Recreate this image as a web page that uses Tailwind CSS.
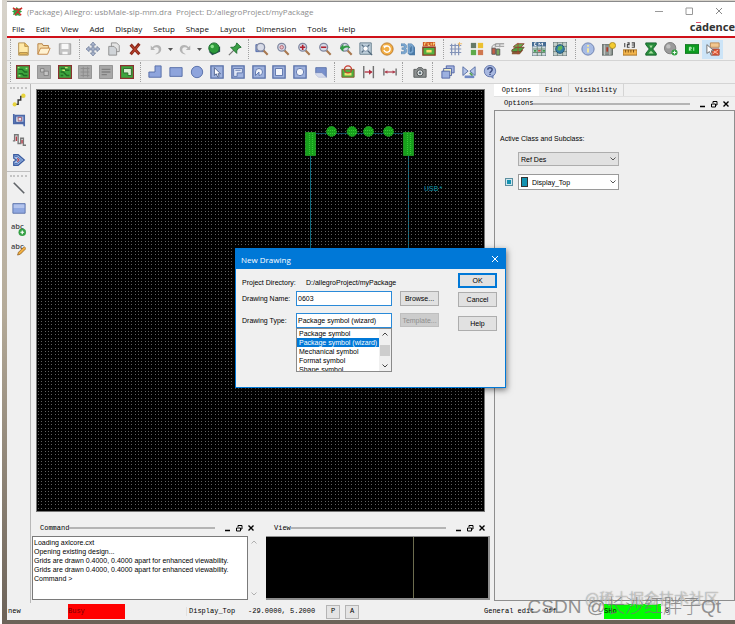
<!DOCTYPE html>
<html lang="en">
<head>
  <meta charset="UTF-8" />
  <meta name="viewport" content="width=device-width, initial-scale=1.0"/>
  <title>Allegro Package Editor</title>
  <script src="https://cdn.jsdelivr.net/npm/@tailwindcss/browser@4"></script>
</head>
<body class="h-screen overflow-hidden border-l-2 border-white bg-gradient-to-b from-[#d8d4cc] via-[#b4aa98] to-[#6c6258] pt-px pb-1 pl-[5px] font-['Liberation_Sans',sans-serif] text-[7px] leading-[9px] text-black">
  <div class="relative flex h-full flex-col border-t border-[#8a8a8a] bg-[#f0f0f0]">

    <!-- Title bar -->
    <header class="flex h-[18px] shrink-0 items-center bg-white pl-[5px] font-['Open_Sans',sans-serif] text-[8px] text-[#8c8c8c]">
      <svg class="mr-1 size-[11px]" viewBox="0 0 12 12">
        <path d="M1 2l3 1 1-2 2 2 4-1-2 3 2 1-3 2 1 3-3-1-2 1-1-2-2 1 1-3-2-1 2-1z" fill="#2fa545"/>
        <path d="M1 2l3 2 3-1M3 10l4-5 4-3M6 6l4 4" stroke="#d22b2b" stroke-width="1.6" fill="none"/>
      </svg>
      <h1 class="whitespace-pre">(Package) Allegro: usbMale-sip-mm.dra  Project: D:/allegroProject/myPackage</h1>
      <div class="ml-auto flex gap-[22px] pr-3">
        <button aria-label="Minimize"><svg class="size-2" viewBox="0 0 8 8"><path d="M0 4.5h8" stroke="#999"/></svg></button>
        <button aria-label="Maximize"><svg class="size-2" viewBox="0 0 8 8"><path d="M1 1h6.500v6.500h-6.500z" stroke="#999" fill="none"/></svg></button>
        <button aria-label="Close"><svg class="size-2" viewBox="0 0 8 8"><path d="M1 1l6 6M7 1l-6 6" stroke="#888" fill="none"/></svg></button>
      </div>
    </header>

    <!-- Menu -->
    <nav class="flex h-[18px] shrink-0 items-center border-b-2 border-[#cf1019] bg-white pl-[5px] font-['Open_Sans',sans-serif] text-[8px] text-[#111]">
      <div class="flex gap-[11px]">
        <button>File</button><button>Edit</button><button>View</button><button>Add</button><button>Display</button><button>Setup</button><button>Shape</button><button>Layout</button><button>Dimension</button><button>Tools</button><button>Help</button>
      </div>
      <div class="ml-auto pb-1 font-['Noto_Sans',sans-serif] text-[11px] font-bold text-[#333]">c<span class="relative">a<i class="absolute top-[3px] left-px h-px w-[5px] bg-[#e0506e]"></i></span>dence</div>
    </nav>

    <!-- Toolbars -->
    <div class="flex h-[23px] shrink-0 items-center border-b border-[#d4d4d4]">
      <div class="ml-[3px] h-5 border-l border-dotted border-[#a0a0a0]"></div>
      <div class="ml-[2px] flex w-[62px]" data-tools="new open save"></div>
      <div class="ml-[4px] h-5 border-l border-dotted border-[#a0a0a0]"></div>
      <div class="ml-[3px] flex w-[162px]" data-tools="move copy delete undo caret redo caret globe pin"></div>
      <div class="ml-[3px] h-5 border-l border-dotted border-[#a0a0a0]"></div>
      <div class="ml-[3px] flex w-[187px]" data-tools="zoomRect zoomFit zoomIn zoomOut zoomPrev zoomWorld refresh view3d flip"></div>
      <div class="ml-[4px] h-5 border-l border-dotted border-[#a0a0a0]"></div>
      <div class="ml-[2px] flex w-[124px]" data-tools="grid colors shadow layers cm web"></div>
      <div class="ml-[5px] h-5 border-l border-dotted border-[#a0a0a0]"></div>
      <div class="ml-[2px] flex w-[145px]" data-tools="info highlight measure waive dehilite r1 place"></div>
    </div>
    <div class="flex h-[23px] shrink-0 items-center border-b border-[#d4d4d4]">
      <div class="ml-[3px] h-5 border-l border-dotted border-[#a0a0a0]"></div>
      <div class="ml-[2px] flex w-[124px]" data-tools="app1 app2 app3 app4 app5 app6"></div>
      <div class="ml-[3px] h-5 border-l border-dotted border-[#a0a0a0]"></div>
      <div class="ml-[4px] flex w-[186px]" data-tools="poly rect circle select voidPoly voidCurve voidRect voidCircle island"></div>
      <div class="ml-[3px] h-5 border-l border-dotted border-[#a0a0a0]"></div>
      <div class="ml-[3px] flex w-[62px]" data-tools="board dimEdge dimLine"></div>
      <div class="ml-[2px] h-5 border-l border-dotted border-[#a0a0a0]"></div>
      <div class="ml-[6px] flex w-[21px]" data-tools="camera"></div>
      <div class="ml-[2px] h-5 border-l border-dotted border-[#a0a0a0]"></div>
      <div class="ml-[5px] flex w-[62px]" data-tools="cascade mirror help"></div>
    </div>

    <!-- Work area -->
    <main class="flex min-h-0 flex-1">
      <aside class="w-6 shrink-0 border-r border-[#b8b8b8] pt-[3px]">
        <div class="mx-[3px] border-t-2 border-dotted border-[#c4c4c4]"></div>
        <div class="flex flex-col pt-px" data-vtools="connect slide tune phase"></div>
        <div class="mt-px mb-[3px] border-t border-[#c0c0c0]"></div>
        <div class="mx-[3px] border-t-2 border-dotted border-[#c4c4c4]"></div>
        <div class="flex flex-col pt-px" data-vtools="line box textAdd textEdit"></div>
      </aside>

      <section class="flex min-w-0 flex-1 flex-col pt-[5px] pr-[4px] pb-[3px]">
        <div class="mr-[5px] ml-[5px] min-h-0 flex-1 overflow-hidden border border-[#777] bg-black">
          <svg class="size-full" role="img" aria-label="Board canvas">
            <defs>
              <pattern id="dots" width="10" height="10" patternUnits="userSpaceOnUse">
                <path d="M1 1h1M4 1h1M8 1h1M1 4h1M4 4h1M8 4h1M1 8h1M4 8h1M8 8h1" transform="translate(0 .5)" stroke="#606060"/>
              </pattern>
            </defs>
            <path d="M279 43.500h88" stroke="#0d4a5c" />
            <path d="M273.500 66v220M371.500 66v220" stroke="#0b6a80"/>
            <rect width="100%" height="100%" fill="url(#dots)"/>
            <g fill="#17a01c" stroke="#35c835" stroke-dasharray="1 1">
              <rect x="268.500" y="42.500" width="10" height="23"/>
              <rect x="366.500" y="42.500" width="10" height="23"/>
              <path d="M272.500 43v22M275.500 43v22M370.500 43v22M373.500 43v22"/>
              <circle cx="294.500" cy="41.500" r="5"/><circle cx="315" cy="41.500" r="5"/><circle cx="331.500" cy="41.500" r="5"/><circle cx="351.500" cy="41.500" r="5"/>
              <path d="M291 40.500h7M291 43.500h7M312 40.500h7M312 43.500h7M328 40.500h7M328 43.500h7M348 40.500h7M348 43.500h7"/>
            </g>
            <text x="387" y="101" fill="#0d8ea4" class="font-['Liberation_Mono',monospace] text-[8px]">USB*</text>
          </svg>
        </div>

        <!-- Docked windows -->
        <div class="flex shrink-0 gap-[7px] pt-2 pl-px">
          <section class="w-[227px] shrink-0">
            <div class="flex h-4 items-center pr-1 pl-2 font-['Liberation_Mono',monospace]">
              <h2>Command</h2>
              <div class="mr-2 h-[2px] flex-1 bg-[#b4b4b4]"></div>
              <div class="flex gap-1" data-dock></div>
            </div>
            <div class="flex h-16">
              <div class="min-w-0 flex-1 border border-[#7a7a7a] bg-white pt-px pl-px whitespace-nowrap">
                <p>Loading axlcore.cxt</p>
                <p>Opening existing design...</p>
                <p>Grids are drawn 0.4000, 0.4000 apart for enhanced viewability.</p>
                <p>Grids are drawn 0.4000, 0.4000 apart for enhanced viewability.</p>
                <p>Command &gt;</p>
              </div>
              <div class="flex w-[11px] flex-col items-center justify-between py-1">
                <svg class="h-1 w-[6px]" viewBox="0 0 6 4"><path d="M.5 3.500L3 1l2.500 2.500" stroke="#b0b0b0" fill="none"/></svg>
                <svg class="h-1 w-[6px]" viewBox="0 0 6 4"><path d="M.5 .5L3 3l2.500-2.500" stroke="#b0b0b0" fill="none"/></svg>
              </div>
            </div>
          </section>
          <section class="min-w-0 flex-1">
            <div class="flex h-4 items-center pr-1 pl-2 font-['Liberation_Mono',monospace]">
              <h2>View</h2>
              <div class="mr-2 h-[2px] flex-1 bg-[#b4b4b4]"></div>
              <div class="flex gap-1" data-dock></div>
            </div>
            <div class="flex h-16 border-t border-r-2 border-b-2 border-[#8e8e8e] bg-black">
              <div class="w-2/3 border-r border-[#6c6c4e]"></div>
            </div>
          </section>
        </div>
      </section>

      <!-- Options panel -->
      <section class="flex w-[241px] shrink-0 flex-col">
        <div class="flex h-[13px] border-b border-[#e0e0e0] font-['Liberation_Mono',monospace]" role="tablist">
          <button role="tab" aria-selected="true" class="w-[45px] bg-white">Options</button>
          <button role="tab" class="w-[30px] border-r border-[#d4d4d4]">Find</button>
          <button role="tab" class="w-[55px] border-r border-[#d4d4d4]">Visibility</button>
        </div>
        <div class="flex h-[13px] items-center pr-[5px] pl-[10px] font-['Liberation_Mono',monospace]">
          <h2>Options</h2>
          <div class="mr-2 h-[2px] flex-1 bg-[#b4b4b4]"></div>
          <div class="flex gap-1" data-dock></div>
        </div>
        <form class="mb-[2px] flex-1 border border-[#8e8e8e] bg-[#efefef] pt-[23px] pl-[5px]">
          <label for="activeClass">Active Class and Subclass:</label>
          <div class="mt-[9px] ml-[18px] w-[101px]">
            <div class="relative">
              <select id="activeClass" class="h-[14px] w-full appearance-none border border-[#adadad] bg-[#e1e1e1] px-[2px]"><option>Ref Des</option></select>
              <svg class="pointer-events-none absolute top-[5px] right-[3px] h-1 w-[6px]" viewBox="0 0 6 4"><path d="M.5 .5L3 3l2.500-2.500" stroke="#555" fill="none"/></svg>
            </div>
          </div>
          <div class="mt-2 flex items-center gap-[5px] pl-[5px]">
            <input type="checkbox" checked aria-label="Subclass visible" class="size-2 appearance-none border border-[#5c8fa0] bg-[#1492b0] shadow-[inset_0_0_0_1px_#cfe6ee]" />
            <div class="relative w-[101px]">
              <select aria-label="Active subclass" class="h-4 w-full appearance-none border border-[#9a9a9a] bg-white pr-3 pl-[13px]"><option>Display_Top</option></select>
              <i class="absolute top-[3px] left-[3px] h-[10px] w-[7px] border border-[#333] bg-[#1492b0]"></i>
              <svg class="pointer-events-none absolute top-[6px] right-[3px] h-1 w-[6px]" viewBox="0 0 6 4"><path d="M.5 .5L3 3l2.500-2.500" stroke="#555" fill="none"/></svg>
            </div>
          </div>
        </form>
      </section>
    </main>

    <!-- Status bar -->
    <footer class="flex h-[17px] shrink-0 items-center font-['Liberation_Mono',monospace]">
      <span class="w-[61px] pl-px">new</span>
      <span class="h-[15px] w-[57px] bg-[#ff0000] leading-[15px] text-[#7a0000]">Busy</span>
      <span class="ml-[61px] w-[62px] border-l border-[#e0e0e0] pl-[2px]">Display_Top</span>
      <span class="w-[78px] whitespace-nowrap">-29.0000, 5.2000</span>
      <button class="mr-[5px] h-[14px] w-[14px] border border-[#b4b4b4] bg-[#e4e4e4]">P</button>
      <button class="h-[14px] w-[14px] border border-[#b4b4b4] bg-[#e4e4e4]">A</button>
      <span class="ml-auto w-[60px] whitespace-nowrap">General edit</span>
      <span class="w-[60px]">Off</span>
      <span class="h-[15px] w-[57px] bg-[#00ff00] leading-[15px]">SHo</span>
      <span class="w-[74px] pl-1">0</span>
    </footer>

    <!-- New Drawing dialog -->
    <div role="dialog" aria-labelledby="dlgTitle" class="absolute top-[246px] left-[228px] w-[271px] border border-[#0078d7] bg-[#f0f0f0] shadow-[1px_2px_6px_rgba(0,0,0,0.5)]">
      <div class="flex h-5 items-center justify-between bg-[#0078d7] pr-[6px] pl-[5px] text-white">
        <h2 id="dlgTitle" class="font-['Open_Sans',sans-serif] text-[8px]">New Drawing</h2>
        <button aria-label="Close"><svg class="size-2" viewBox="0 0 8 8"><path d="M1 1l6 6M7 1l-6 6" stroke="#fff" fill="none"/></svg></button>
      </div>
      <form class="flex h-[118px] justify-between pt-1 pr-2 pl-[6px]">
        <div>
          <div class="flex h-[18px] items-center">
            <span class="w-16">Project Directory:</span><span>D:/allegroProject/myPackage</span>
          </div>
          <div class="flex items-center">
            <label for="drawingName" class="w-[54px] whitespace-nowrap">Drawing Name:</label>
            <input id="drawingName" value="0603" class="h-[15px] w-[96px] border border-[#2a8ad8] bg-white px-px" />
            <button type="button" class="ml-2 h-[15px] w-[39px] border border-[#adadad] bg-[#e1e1e1]">Browse...</button>
          </div>
          <div class="mt-[7px] flex items-start">
            <label for="drawingType" class="w-[54px] pt-[3px] whitespace-nowrap">Drawing Type:</label>
            <div class="w-[96px]">
              <select id="drawingType" class="block h-[15px] w-full appearance-none border border-[#2a8ad8] bg-white px-px"><option>Package symbol (wizard)</option></select>
              <ul role="listbox" class="relative h-11 overflow-hidden border border-[#8a8a8a] bg-white pr-3 whitespace-nowrap">
                <li role="option" class="pl-[2px]">Package symbol</li>
                <li role="option" aria-selected="true" class="bg-[#0078d7] pl-[2px] text-white">Package symbol (wizard)</li>
                <li role="option" class="pl-[2px]">Mechanical symbol</li>
                <li role="option" class="pl-[2px]">Format symbol</li>
                <li role="option" class="pl-[2px]">Shape symbol</li>
                <li role="presentation" class="absolute inset-y-0 right-0 flex w-3 flex-col items-center justify-between bg-[#f0f0f0] py-[3px]">
                  <svg class="h-1 w-[6px]" viewBox="0 0 6 4"><path d="M.5 3.500L3 1l2.500 2.500" stroke="#444" fill="none"/></svg>
                  <i class="h-[11px] w-[10px] bg-[#cdcdcd]"></i>
                  <svg class="h-1 w-[6px]" viewBox="0 0 6 4"><path d="M.5 .5L3 3l2.500-2.500" stroke="#444" fill="none"/></svg>
                </li>
              </ul>
            </div>
            <button type="button" disabled class="ml-2 h-[14px] w-[39px] border border-[#bfbfbf] bg-[#cccccc] text-[#8c8c8c]">Template...</button>
          </div>
        </div>
        <div class="flex w-[39px] flex-col">
          <button type="button" class="h-[15px] border-2 border-[#0078d7] bg-[#e1e1e1]">OK</button>
          <button type="button" class="mt-1 h-[15px] border border-[#adadad] bg-[#e1e1e1]">Cancel</button>
          <button type="button" class="mt-[9px] h-[15px] border border-[#adadad] bg-[#e1e1e1]">Help</button>
        </div>
      </form>
    </div>

    <!-- Watermarks -->
    <div class="pointer-events-none absolute right-4 bottom-3 font-['Noto_Sans_CJK_SC',sans-serif] text-[15px] leading-[20px] font-light whitespace-nowrap text-white/60 [text-shadow:0_0_1px_#555]">@稀土掘金技术社区</div>
    <div class="pointer-events-none absolute right-[14px] bottom-0 font-['Liberation_Sans','Noto_Sans_CJK_SC',sans-serif] text-[19px] leading-[26px] font-light whitespace-nowrap text-[#777]/80">CSDN @长沙红胖子Qt</div>
  </div>

  <script>
    const lens = '<path d="M9.500 9.500l5 5" stroke="#a87850" stroke-width="2.400"/><circle cx="6.500" cy="6" r="4.500" fill="#d7dbe8" stroke="#8088a0" stroke-width="1.500"/>';
    const pcb = '<path d="M.5 .5h15v15h-15z" fill="#3da53d" stroke="#8a3030" stroke-width="1.800"/>';
    const off = '<path d="M.5 .5h15v15h-15z" fill="#a8a8a8" stroke="#8c8c8c"/>';
    const blue = '<path d="M1 1h14v14h-14z" fill="#9fb2de" stroke="#5870a8" stroke-width="1.500"/>';

    const icons = {
      new: '<path d="M3 1h7l4 4v10h-11z" fill="#ffe9a8" stroke="#b08a48"/><path d="M10 1v4h4M4 12h9v2h-9z" fill="#f2c35c" stroke="#b08a48"/>',
      open: '<path d="M1 14v-12h5l1 2h6v3" fill="#f5dba8" stroke="#b07838"/><path d="M1 14l3-7h11l-3 7z" fill="#fff2d2" stroke="#c0803c"/>',
      save: '<path d="M1.500 2h13v12h-13z" fill="#c4c4c4" stroke="#a0a0a0"/><path d="M4 2h8v6h-8zM5 11h6v3h-6z" fill="#f8f8f8"/>',
      move: '<path d="M8 0l3 3.500h-2v3.500h3.500v-2l3.500 3-3.500 3v-2h-3.500v3.500h2l-3 3.500-3-3.500h2v-3.500h-3.500v2l-3.500-3 3.500-3v2h3.500v-3.500h-2z" fill="#a8b4cc" stroke="#5c6c8c" stroke-width=".7"/>',
      copy: '<path d="M5 1h6l3 3v7h-9z" fill="#e4e4e4" stroke="#8a8a8a"/><path d="M2 5h6l3 3v7h-9z" fill="#d0d4d8" stroke="#8a8a8a"/>',
      delete: '<path d="M3 3l10 11M13 2l-10 12" stroke="#8c2a1c" stroke-width="3.500"/><path d="M4 4l8 9M12 4l-8 9" stroke="#d04a30" stroke-width="1"/>',
      undo: '<path d="M2 4v5h5l-2-2c3-2 7-1 6 3-.3 2-2 3-4 4 5 0 7-3 7-6 0-5-7-6-10-2z" fill="#b4b4b4"/>',
      redo: '<path d="M14 4v5h-5l2-2c-3-2-7-1-6 3 .3 2 2 3 4 4-5 0-7-3-7-6 0-5 7-6 10-2z" fill="#b4b4b4"/>',
      globe: '<path d="M2 11l4 4 9-4v-6" fill="#30505c"/><circle cx="8" cy="7" r="6" fill="#2c9a3a" stroke="#17642a"/><circle cx="6" cy="5" r="2" fill="#8be08c"/>',
      pin: '<path d="M7 9l-6 6" stroke="#777" stroke-width="1.500"/><path d="M10 1l5 5-3 1-2 3 0 3-7-7 3 0 3-2z" fill="#3ba046" stroke="#1a6a2c"/>',
      zoomRect: '<path d="M1 3h9v8h-9z" fill="#7f98d0" stroke="#5068a8"/>' + lens,
      zoomFit: lens + '<circle cx="6.500" cy="6" r="2" fill="#e8c0c4" stroke="#b06070"/>',
      zoomIn: lens + '<path d="M6.500 3v6M3.500 6h6" stroke="#b02030" stroke-width="1.800"/>',
      zoomOut: lens + '<path d="M3.500 6h6" stroke="#b02030" stroke-width="1.800"/>',
      zoomPrev: lens + '<path d="M1 7l4-5v3c4-2 7-1 8 2-3-1-5-1-8 1v3z" fill="#2e9a42"/>',
      zoomWorld: '<path d="M1 1h13v13h-13z" fill="#c0d0dc" stroke="#5f7888"/><path d="M3 3l3 3M12 3l-3 3M3 12l3-3M10 10l5 5" stroke="#50687c" stroke-width="1.500"/><circle cx="7.500" cy="7.500" r="3" fill="#fff" stroke="#7088a0"/>',
      refresh: '<circle cx="8" cy="8" r="7" fill="#f2ae45" stroke="#b87420"/><path d="M5.500 5.500a3.600 3.600 0 1 1-1 3.500" stroke="#fff" stroke-width="1.600" fill="none"/><path d="M3.500 4h4.500l-3 3.500z" fill="#fff"/>',
      view3d: '<path d="M12 2l4 4v9h-6l-2-2z" fill="#4a7aa6"/><path d="M0 2h4.500l2 2v2.500l-1 1 1 1v3l-2 2h-4.500v-2.500h3.500v-2.500h-2.500v-2h2.500v-2h-3.500zM8 2h4l2.500 2.500v6.500l-2.500 2.500h-4zM10.300 4.500v6.500h1l1-1v-4.500l-1-1z" fill="#7ba8d2" fill-rule="evenodd" stroke="#46749e" stroke-width=".5"/>',
      flip: '<path d="M1 6h14v9h-14z" fill="#54b040" stroke="#8a3c24" stroke-width="1.500"/><path d="M1 0h14v5h-14z" fill="#d05828"/><path d="M3 1v3M3 1h2M7 1v3h2M10.500 1v3M13 4v-3h1v1.500" stroke="#ffe680" fill="none"/><path d="M5 9h6v3h-6z" fill="#ffe070"/>',
      grid: '<path d="M1 4h13M1 8h13M1 12h13M3 2v13M7 2v13M11 2v13" stroke="#8494b8" stroke-width="1.400"/><path d="M12 0v5M10 2h5" stroke="#f0b860"/>',
      colors: '<path d="M1 1h6v6h-6z" fill="#667a68"/><path d="M9 1h6v6h-6z" fill="#ecc030"/><path d="M1 9h6v6h-6z" fill="#5eaa4a"/><path d="M9 9h6v6h-6z" fill="#d07850"/>',
      shadow: '<path d="M5 2h10M5 5h10M5 2v4M10 2v4" stroke="#a8a8a8" stroke-width="1.500"/><path d="M1 7h4v7h-4z" fill="#c46048" stroke="#555"/><path d="M6 8h4v7h-4z" fill="#78a860" stroke="#555"/><path d="M1 7c0-4 3-4 5-4" stroke="#888" fill="none"/>',
      layers: '<path d="M1 12l5-3h8l-4 5h-9z" fill="#8a5a38"/><path d="M1 9l5-3h9l-4 5h-10z" fill="#4fa040" stroke="#704028"/><path d="M3 5l4-3h8l-4 4h-8z" fill="#68b050" stroke="#8c3c2c"/><path d="M8 1v13" stroke="#b04030"/>',
      cm: '<path d="M0 0h16v16h-16z" fill="#cdd8dc" stroke="#546878"/><path d="M0 0h16v5h-16z" fill="#466c94"/><path d="M5 1h-2v3h2M8 4v-3l2 2 2-2v3" stroke="#fff" fill="none"/><path d="M1 8h14M1 12h14M6 5v11M11 5v11" stroke="#60806c"/><path d="M2 9h3v2h-3zM12 9h3v2h-3z" fill="#3c9a48"/><path d="M7 9h3v2h-3z" fill="#c44"/>',
      web: '<path d="M0 0h16v16h-16z" fill="#c4d0cc" stroke="#506068"/><path d="M0 5h16M0 11h16M5 0v16M11 0v16" stroke="#708078"/><circle cx="8" cy="8" r="5" fill="#347ca8" stroke="#225470"/><path d="M6 5l4-1 1 3-3 3-3-1z" fill="#62b458"/>',
      info: '<circle cx="8" cy="8" r="7" fill="#a8bce4" stroke="#6478a8"/><path d="M8 7v5M8 3.500v2" stroke="#f4e8a0" stroke-width="2.200"/>',
      highlight: '<path d="M0 3h12v12h-12z" fill="#8c9490" stroke="#5c6460"/><path d="M3 3v12M9 3v12" stroke="#d0d4d0"/><path d="M5 6h2v5h-2z" fill="#b03828"/><circle cx="12" cy="4" r="3.500" fill="#f4cc30" stroke="#a88820"/>',
      measure: '<path d="M2 1v5M5 1h2v2h-2v3h2.500M10 1h3v5h-3M10 3.500h3" stroke="#444" fill="none" stroke-width="1.200"/><path d="M0 9h16v6h-16z" fill="#f2b44c" stroke="#a06c20"/><path d="M3 9v3M6 9v3M9 9v3M12 9v3" stroke="#704810"/>',
      waive: '<path d="M2 1h12v2l-4 5 4 5v2h-12v-2l4-5-4-5z" fill="#288c3c" stroke="#14602a"/><path d="M6 4h4l-2 3zM8 10l3 3h-6z" fill="#a8e0a0"/>',
      dehilite: '<circle cx="7" cy="7" r="6.500" fill="#9a9a9a" stroke="#787878"/><circle cx="5" cy="5" r="2.500" fill="#c0c0c0"/><circle cx="12" cy="12" r="3.500" fill="#34a044"/><path d="M12 10v4M10 12h4" stroke="#fff"/>',
      r1: '<path d="M0 3h16v10h-16z" fill="#0e9c20" stroke="#0a6c18"/><path d="M5 10v-4h2v2h-2l2 2M10 6v4" stroke="#d8ffd8" fill="none"/>',
      place: '<path d="M5 1h10v5h-10z" fill="#f2c890" stroke="#b8824c"/><path d="M6 8h9v7h-9z" fill="#e05838" stroke="#a03c24"/><path d="M7 9l7 5M14 9l-7 5" stroke="#ffc8b0"/><path d="M1 3v10l3-2 2 4 1-1-1-4h3z" fill="#fff" stroke="#666"/>',
      app1: pcb + '<path d="M3 5h4l3 3h3M3 10h4l2 2h4" stroke="#1f6a24" stroke-width="1.600" fill="none"/><path d="M2 3h2M11 4h2M3 12h2" stroke="#a4e880" stroke-width="1.500"/>',
      app2: off + '<path d="M4 4h4v4h-4zM8 7h5v5h-5z" fill="#c4c4c4" stroke="#808080"/>',
      app3: pcb + '<path d="M3 4h4l2 2h4M3 8h3l4 4h3M3 12h3" stroke="#236a22" stroke-width="1.600" fill="none"/><path d="M8 3h3M5 6h3" stroke="#c8e870" stroke-width="1.500"/>',
      app4: off + '<path d="M3 4h10M3 8h10M3 12h10M6 2v12M11 2v12" stroke="#8c8c8c"/>',
      app5: off + '<path d="M3 5h10M3 8h10M3 11h6" stroke="#808080" stroke-width="1.500"/>',
      app6: pcb + '<path d="M4 4h9v8h-4v-3h-5z" fill="#d8f0d0" stroke="#286428"/>',
      poly: '<path d="M8 1h7v13h-14v-6h7z" fill="#8ea4dc" stroke="#5068a4"/>',
      rect: '<path d="M1 3h14v10h-14z" fill="#8ea4dc" stroke="#5068a4"/>',
      circle: '<circle cx="8" cy="8" r="6.500" fill="#8ea4dc" stroke="#5068a4"/>',
      select: blue + '<path d="M5 3v9l2-2 2 4 1.500-1-1.500-3h3z" fill="#fff" stroke="#485c88"/>',
      voidPoly: blue + '<path d="M3 4h10v5h-6v4h-4z" fill="#dfe6f6" stroke="#5870a8"/><path d="M5 6h6" stroke="#5870a8"/>',
      voidCurve: blue + '<path d="M4 12v-4a4 4 0 1 1 4 4v-4z" fill="#f0f3fa" stroke="#5870a8"/>',
      voidRect: blue + '<path d="M4 4h8v8h-8z" fill="#f4f6fb" stroke="#5870a8"/>',
      voidCircle: blue + '<circle cx="8" cy="8" r="4.200" fill="#f4f6fb" stroke="#5870a8"/>',
      island: '<path d="M2 3h12v11l-5-5h-7z" fill="#7890cc" stroke="#5870a8"/><path d="M2 9h7l5 5h-9l-3-3z" fill="#d4daec" stroke="#a8b4d4" stroke-width=".6"/>',
      board: '<path d="M1 5h14v9h-14z" fill="#4eb03e" stroke="#8a5028"/><path d="M4 9h8v3h-8z" fill="#f0e070"/><circle cx="8" cy="5" r="4" fill="none" stroke="#c83c30" stroke-width="1.500"/>',
      dimEdge: '<path d="M2 1v14M13 1v14" stroke="#707070" stroke-width="1.600"/><path d="M3 8h8" stroke="#b03040" stroke-width="1.500"/><path d="M8 5l4 3-4 3z" fill="#b03040"/>',
      dimLine: '<path d="M1 4v8M15 4v8" stroke="#707070" stroke-width="1.600"/><path d="M2 8h12" stroke="#b04050" stroke-width="1.400"/><path d="M5 6l-3 2 3 2zM11 6l3 2-3 2z" fill="#b04050"/>',
      camera: '<path d="M1 5h3l2-2h4l2 2h3v9h-14z" fill="#8c9090" stroke="#505454"/><circle cx="8" cy="9" r="3.500" fill="#e4e8e8" stroke="#404444"/><circle cx="8" cy="9" r="1.500" fill="#607078"/>',
      cascade: '<path d="M6 1h9v8h-9z" fill="#a4b4e0" stroke="#4c60a0"/><path d="M3 4h9v8h-9z" fill="#f2f0c8" stroke="#4c60a0"/><path d="M1 7h9v8h-9z" fill="#9cb0e0" stroke="#4c60a0"/>',
      mirror: '<path d="M1 2l6 5-6 5zM15 2l-6 5 6 5z" fill="#b4c4e8" stroke="#5068a0"/><path d="M3 12h11v3h-11z" fill="#6f88c4"/><path d="M9 9l3 3" stroke="#4a9a50" stroke-width="2"/>',
      help: '<circle cx="8" cy="7" r="6.500" fill="#a8b8e0" stroke="#5c70a8"/><path d="M8 13l4 3v-5z" fill="#7084b8"/><path d="M5.500 5.500c0-3 5-3 5 0 0 2-2.500 2-2.500 3.500M8 10v1.500" stroke="#3c4c80" stroke-width="1.700" fill="none"/>',
      connect: '<path d="M3 13h4v-5h3v-4h4" stroke="#333" stroke-width="1.600" fill="none"/><circle cx="3" cy="13" r="2.300" fill="#e8d43c"/><circle cx="13" cy="3" r="2.500" fill="#e8d43c"/>',
      slide: '<path d="M2 1v11h12v3M4 3h10v8h-10z" stroke="#4c68a8" stroke-width="1.800" fill="#a4b8e0"/><path d="M7 5h4v4h-4z" fill="#e4e8f4" stroke="#a05060"/>',
      tune: '<path d="M1 9h2v-7h4v10h3v-6h3v8h3" stroke="#777" stroke-width="1.600" fill="none"/><path d="M5 9v-5M11.500 12v-4" stroke="#b83c48" stroke-width="1.500"/>',
      phase: '<path d="M2 2h5l7 6-7 6h-5v-4l3-2-3-2z" fill="#a8c4ec" stroke="#3c5ca0" stroke-width="1.500"/><path d="M3 4h3l5 4-5 4h-3" stroke="#4468b0" fill="none"/><path d="M6 6l2 2-2 2" stroke="#b04858" stroke-width="1.300" fill="none"/>',
      line: '<path d="M2 2l12 12" stroke="#606468" stroke-width="1.800"/>',
      box: '<path d="M1 3h14v11h-14z" fill="#90a8e0" stroke="#5870a8"/><path d="M2 4h12v4h-12z" fill="#b4c4ec"/>',
    };

    // the two text tools carry a label with a badge over it
    const textIcons = {
      textAdd: '<circle cx="12" cy="12" r="4" fill="#34a044"/><path d="M12 10v4M10 12h4" stroke="#fff" stroke-width="1.300"/>',
      textEdit: '<path d="M7 15l1-3 6-6 2 2-6 6z" fill="#f2b040" stroke="#8c5c20" stroke-width=".8"/>',
    };

    function iconSvg(name) {
      if (textIcons[name]) {
        return `<svg class="size-[15px]" viewBox="0 0 16 16" fill="none"><text x="0" y="8" fill="#444" class="font-['Open_Sans',sans-serif] text-[8px] font-semibold">abc</text>${textIcons[name]}</svg>`;
      }
      return `<svg class="size-[14px]" viewBox="0 0 16 16" fill="none">${icons[name]}</svg>`;
    }

    document.querySelectorAll('[data-tools]').forEach(bar => {
      bar.innerHTML = bar.dataset.tools.split(' ').map(name => {
        if (name === 'caret') {
          return '<button aria-label="More" class="flex w-2 shrink-0 items-center justify-center"><svg class="h-[3px] w-[5px]" viewBox="0 0 5 3"><path d="M0 0h5l-2.500 3z" fill="#555"/></svg></button>';
        }
        const bg = name === 'place' ? 'bg-[#cce4f7]' : '';
        return `<button aria-label="${name}" class="flex h-[19px] flex-1 items-center justify-center ${bg}">${iconSvg(name)}</button>`;
      }).join('');
    });

    document.querySelectorAll('[data-vtools]').forEach(bar => {
      bar.innerHTML = bar.dataset.vtools.split(' ').map(name =>
        `<button aria-label="${name}" class="flex h-5 items-center justify-center">${iconSvg(name)}</button>`
      ).join('');
    });

    document.querySelectorAll('[data-dock]').forEach(box => {
      box.innerHTML = `
        <button aria-label="Minimize"><svg class="size-2" viewBox="0 0 8 8"><path d="M2 6.500h5" stroke="#000" stroke-width="1.500"/></svg></button>
        <button aria-label="Float"><svg class="size-2" viewBox="0 0 8 8" fill="none" stroke="#000"><path d="M3 3v-1.500h4v3.500h-1.500M1.500 4h4v3h-4z"/></svg></button>
        <button aria-label="Close"><svg class="size-2" viewBox="0 0 8 8"><path d="M1.500 1.500l5 5M6.500 1.500l-5 5" stroke="#000" stroke-width="1.400"/></svg></button>
      `;
    });
  </script>
</body>
</html>
